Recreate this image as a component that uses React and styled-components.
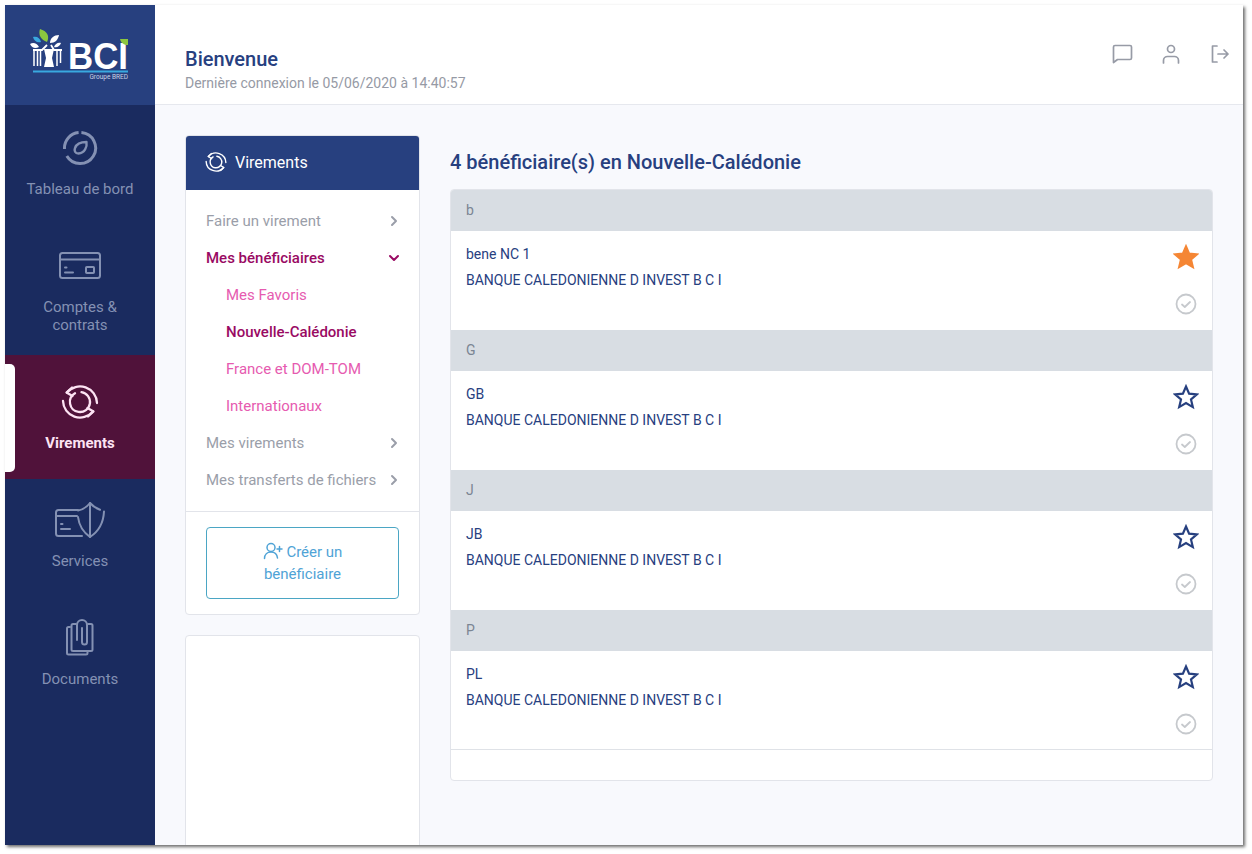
import React from 'react';
import styled, { createGlobalStyle } from 'styled-components';

const GlobalStyle = createGlobalStyle`
    html, body { margin: 0; padding: 0; height: 100%; background: #fff; overflow: hidden; }
    body { font-family: Roboto, "Liberation Sans", sans-serif; }
    * { box-sizing: border-box; }
`;

const NAV = [
    { id: 'board', label: 'Tableau de bord', icon: <BoardIcon /> },
    { id: 'accounts', label: <>Comptes &amp;<br />contrats</>, icon: <CardIcon /> },
    { id: 'transfers', label: 'Virements', icon: <TransferIcon size={38} width={2.300} />, active: true },
    { id: 'services', label: 'Services', icon: <ServicesIcon /> },
    { id: 'documents', label: 'Documents', icon: <DocumentsIcon /> },
];

const MENU = [
    { label: 'Faire un virement', arrow: 'right' },
    { label: 'Mes bénéficiaires', arrow: 'down', open: true },
    { label: 'Mes Favoris', sub: true },
    { label: 'Nouvelle-Calédonie', sub: true, current: true },
    { label: 'France et DOM-TOM', sub: true },
    { label: 'Internationaux', sub: true },
    { label: 'Mes virements', arrow: 'right' },
    { label: 'Mes transferts de fichiers', arrow: 'right' },
];

const GROUPS = [
    { letter: 'b', name: 'bene NC 1', favorite: true },
    { letter: 'G', name: 'GB' },
    { letter: 'J', name: 'JB' },
    { letter: 'P', name: 'PL' },
];

function BoardIcon() {
    return (
        <svg width="38" height="38" viewBox="0 0 38 38" fill="none" stroke="currentColor" strokeWidth="3" strokeLinecap="butt" strokeLinejoin="round">
            <path d="M3.500 20A15.500 15.500 0 0 1 17.600 3.600M20.400 3.600A15.500 15.500 0 1 1 5.800 27" />
            <path d="M25.500 13c.8 5-1.800 11-8 11.500-3.500 0-4.500-3-3.500-5.500 1.400-4 6.500-6 11.500-6z" strokeWidth="2.400" />
        </svg>
    );
}

function CardIcon() {
    return (
        <svg width="44" height="30" viewBox="0 0 44 30" fill="none" stroke="currentColor" strokeWidth="2" strokeLinecap="round" strokeLinejoin="round">
            <rect x="2" y="2" width="40" height="25" rx="2.500" />
            <path d="M2 8.500h40" />
            <path d="M7 16.500h1.500M7 21.500h8" />
            <rect x="28" y="16" width="8" height="6" rx=".8" />
        </svg>
    );
}

function TransferIcon({ size = 38, width = 2 }) {
    return (
        <svg width={size} height={size} viewBox="0 0 38 38" fill="none" stroke="currentColor" strokeWidth={width} strokeLinecap="round" strokeLinejoin="round">
            <path d="M6 9.500A17 17 0 0 1 36 20" />
            <path d="M11 4.500L5.500 9.500l6 3.500" />
            <path d="M32 28.500A17 17 0 0 1 2 18" />
            <path d="M27 33.500l5.500-5-6-3.500" />
            <path d="M20.500 9.100A10 10 0 0 1 17.500 28.900M17.500 28.900A10 10 0 0 1 14 10.300" />
        </svg>
    );
}

function ServicesIcon() {
    return (
        <svg width="52" height="38" viewBox="0 0 52 38" fill="none" stroke="currentColor" strokeWidth="2" strokeLinecap="round" strokeLinejoin="round">
            <path d="M24 9H4.500C3 9 2 10 2 11.500v21C2 34 3 35 4.500 35H28" />
            <path d="M2 15h21" />
            <path d="M7 23h1.500M7 28h9" />
            <path d="M24 9.500C29 8.500 33 6 36 2c3 3.500 6.500 5.500 10 6.800M50 10.500c-.5 10.500-5.500 20-14 25.500-7-5-11-12-12-20" />
            <path d="M36 2v34" />
        </svg>
    );
}

function DocumentsIcon() {
    return (
        <svg width="30" height="38" viewBox="0 0 30 38" fill="none" stroke="currentColor" strokeWidth="2" strokeLinecap="round" strokeLinejoin="round">
            <path d="M5 8H3.500C2.500 8 2 8.500 2 9.500V34c0 1 .5 1.500 1.500 1.500H21c1 0 1.500-.5 1.500-1.500v-2" />
            <path d="M11 5H8c-1 0-1.500.5-1.500 1.500v24c0 1 .5 1.500 1.500 1.500h18c1 0 1.500-.5 1.500-1.500v-24c0-1-.5-1.500-1.500-1.500h-3" />
            <path d="M12 21V6a5 5 0 0 1 10 0v17a2.500 2.500 0 0 1-5 0V9" />
        </svg>
    );
}

function Logo() {
    return (
        <svg width="110" height="60" viewBox="0 0 110 60">
            <path d="M15 4c7 2 10 7 7 13-6-2-9-7-7-13z" fill="#8cc63f" />
            <path d="M8 12c4-1 7 1 8 5-4 1-7-1-8-5z" fill="#39a9e0" />
            <path d="M5 19c3-2 7-1 9 3-4 2-7 1-9-3z" fill="#fff" />
            <path d="M34 10c-1 5-4 8-9 8 0-5 4-8 9-8z" fill="#fff" />
            <path d="M36 18c-1 3-4 5-7 4 1-3 4-5 7-4z" fill="#fff" />
            <path d="M8 25h9l5-5M26 20l3 5h8" stroke="#fff" strokeWidth="1.800" fill="none" />
            <path d="M9 25v16M12.500 25v16M15.500 25v16M32 25v16M35.500 25v13" stroke="#fff" strokeWidth="1.500" fill="none" />
            <path d="M19 24h10l-2 9 2 9h-10l2-9z" fill="#fff" />
            <text x="43" y="43.500" fontFamily="Liberation Sans, sans-serif" fontWeight="700" fontSize="36" textLength="60" lengthAdjust="spacingAndGlyphs" fill="#fff">BCI</text>
            <path d="M95 14h8v6c-4 0-7-2-8-6z" fill="#8cc63f" />
            <path d="M8 46.500h95" stroke="#39a9e0" strokeWidth="2" />
            <text x="103" y="53.500" textAnchor="end" fontFamily="Roboto, sans-serif" fontSize="6.500" fill="#c9d2e6">Groupe BRED</text>
        </svg>
    );
}

function Chevron({ dir }) {
    return (
        <svg width="14" height="14" viewBox="0 0 14 14" fill="none" stroke="currentColor" strokeWidth="2" strokeLinecap="round" strokeLinejoin="round">
            {dir === 'down' ? <path d="M3 5l4 4 4-4" /> : <path d="M5 3l4 4-4 4" />}
        </svg>
    );
}

function StarIcon({ filled }) {
    return (
        <svg width="26" height="26" viewBox="0 0 26 26" fill={filled ? '#f58634' : 'none'} stroke={filled ? '#f58634' : '#27407f'} strokeWidth="2.200" strokeLinejoin="miter">
            <path d="M13 2.500l3.100 7.200 7.800.7-5.900 5.100 1.800 7.600-6.800-4-6.800 4 1.800-7.600-5.900-5.100 7.800-.7z" />
        </svg>
    );
}

function CheckIcon() {
    return (
        <svg width="22" height="22" viewBox="0 0 22 22" fill="none" stroke="#c6c9cd" strokeWidth="1.800" strokeLinecap="round" strokeLinejoin="round">
            <circle cx="11" cy="11" r="9.500" />
            <path d="M7 11.500l2.800 2.500 5.200-5" />
        </svg>
    );
}

export default function App() {
    return (
        <>
            <GlobalStyle />
            <Frame>
                <Sidebar>
                    <LogoBox><Logo /></LogoBox>
                    <Nav>
                        {NAV.map((item) => (
                            <NavItem key={item.id} $active={item.active}>
                                {item.active && <ActiveTab />}
                                <NavIcon>{item.icon}</NavIcon>
                                <NavLabel $active={item.active}>{item.label}</NavLabel>
                            </NavItem>
                        ))}
                    </Nav>
                </Sidebar>

                <Main>
                    <Header>
                        <div>
                            <Welcome>Bienvenue</Welcome>
                            <LastLogin>Dernière connexion le 05/06/2020 à 14:40:57</LastLogin>
                        </div>
                        <HeaderIcons>
                            <svg width="22" height="22" viewBox="0 0 22 22" fill="none" stroke="currentColor" strokeWidth="1.700" strokeLinecap="round" strokeLinejoin="round">
                                <path d="M2.500 19.500V4c0-1 .6-1.500 1.500-1.500h15c1 0 1.500.5 1.500 1.500v11c0 1-.5 1.500-1.500 1.500H6.500z" />
                            </svg>
                            <svg width="22" height="22" viewBox="0 0 22 22" fill="none" stroke="currentColor" strokeWidth="1.700" strokeLinecap="round" strokeLinejoin="round">
                                <circle cx="11" cy="6" r="3.500" />
                                <path d="M3.500 20v-2.500c0-2.500 2-4 4-4h7c2 0 4 1.500 4 4V20" />
                            </svg>
                            <svg width="22" height="22" viewBox="0 0 22 22" fill="none" stroke="currentColor" strokeWidth="1.700" strokeLinecap="round" strokeLinejoin="round">
                                <path d="M8 3H3.500v16H8" />
                                <path d="M9 11h10M15 7l4 4-4 4" />
                            </svg>
                        </HeaderIcons>
                    </Header>

                    <Body>
                        <LeftColumn>
                            <MenuCard>
                                <MenuHead>
                                    <TransferIcon size={22} width={2.400} />
                                    Virements
                                </MenuHead>
                                <MenuList>
                                    {MENU.map((m) => (
                                        <MenuRow key={m.label} $open={m.open} $sub={m.sub} $current={m.current}>
                                            {m.label}
                                            {m.arrow && <Chevron dir={m.arrow} />}
                                        </MenuRow>
                                    ))}
                                </MenuList>
                                <MenuFoot>
                                    <CreateBtn>
                                        <svg width="20" height="18" viewBox="0 0 20 18" fill="none" stroke="currentColor" strokeWidth="1.500" strokeLinecap="round" strokeLinejoin="round">
                                            <circle cx="8" cy="5.500" r="4" />
                                            <path d="M1.500 16.500c0-4 2.800-6.500 6.500-6.500s6 2 6.500 6" />
                                            <path d="M14 7h5M16.500 4.500v5" />
                                        </svg>
                                        {' '}Créer un bénéficiaire
                                    </CreateBtn>
                                </MenuFoot>
                            </MenuCard>
                            <EmptyCard />
                        </LeftColumn>

                        <Content>
                            <PageTitle>4 bénéficiaire(s) en Nouvelle-Calédonie</PageTitle>
                            <Panel>
                                {GROUPS.map((g) => (
                                    <section key={g.letter}>
                                        <GroupHead>{g.letter}</GroupHead>
                                        <Row>
                                            <div>
                                                <Name>{g.name}</Name>
                                                <Bank>BANQUE CALEDONIENNE D INVEST B C I</Bank>
                                            </div>
                                            <RowIcons>
                                                <StarIcon filled={g.favorite} />
                                                <CheckIcon />
                                            </RowIcons>
                                        </Row>
                                    </section>
                                ))}
                                <PanelFoot />
                            </Panel>
                        </Content>
                    </Body>
                </Main>
            </Frame>
        </>
    );
}

const Frame = styled.div`
    display: flex;
    width: 1238px; height: 840px;
    margin: 5px 0 0 5px;
    background: #f8f9fd;
    box-shadow: 2px 2px 3px rgba(60, 60, 60, 0.75);
    overflow: hidden;
`;

const Sidebar = styled.aside`
    width: 150px; flex-shrink: 0;
    background: #1a2b5f;
`;

const LogoBox = styled.div`
    height: 100px;
    background: #27407f;
    display: flex; align-items: center; justify-content: center;
`;

const Nav = styled.nav`display: flex; flex-direction: column;`;

const NavItem = styled.div`
    position: relative;
    display: flex; flex-direction: column; align-items: center;
    padding: ${({ $active }) => ($active ? '29px 0 27px' : '25px 0 25px')};
    margin: ${({ $active }) => ($active ? '-4px 0 -2px' : '0')};
    background: ${({ $active }) => ($active ? '#50123a' : 'transparent')};
    color: ${({ $active }) => ($active ? '#fde3f3' : '#8491b3')};
`;

const ActiveTab = styled.span`
    position: absolute; left: 0; top: 9px;
    width: 10px; height: 108px;
    background: #fff;
    border-radius: 0 5px 5px 0;
`;

const NavIcon = styled.div`
    height: 36px; margin-bottom: 14px;
    display: flex; align-items: center; justify-content: center;
`;

const NavLabel = styled.div`
    font-size: 15px; line-height: 18px;
    text-align: center;
    font-weight: ${({ $active }) => ($active ? 700 : 400)};
`;

const Main = styled.main`
    flex: 1; min-width: 0;
    display: flex; flex-direction: column;
`;

const Header = styled.header`
    height: 100px; flex-shrink: 0;
    background: #fff;
    border-bottom: 1px solid #e6e8ee;
    padding: 42px 12px 0 30px;
    display: flex; justify-content: space-between; align-items: flex-start;
`;

const Welcome = styled.div`
    font-size: 20px; line-height: 24px; font-weight: 500;
    color: #27407f;
`;

const LastLogin = styled.div`
    font-size: 14px; line-height: 20px; margin-top: 2px;
    color: #969aa5;
`;

const HeaderIcons = styled.div`
    display: flex; gap: 27px;
    margin-top: -4px;
    color: #979ba6;
`;

const Body = styled.div`
    flex: 1; min-height: 0;
    display: flex; gap: 30px;
    padding: 30px 30px 0;
`;

const LeftColumn = styled.div`
    width: 235px; flex-shrink: 0;
    display: flex; flex-direction: column; gap: 20px;
`;

const MenuCard = styled.div`
    background: #fff;
    border: 1px solid #e2e4ea;
    border-radius: 4px;
`;

const MenuHead = styled.div`
    height: 54px;
    padding: 0 0 2px 19px;
    background: #27407f;
    border-radius: 3px 3px 0 0;
    color: #fff; font-size: 16px;
    display: flex; align-items: center; gap: 8px;
`;

const MenuList = styled.div`
    padding: 12px 0 13px;
    border-bottom: 1px solid #e2e4ea;
`;

const MenuRow = styled.div`
    height: 37px;
    display: flex; align-items: center; justify-content: space-between;
    padding: 0 18px 0 ${({ $sub }) => ($sub ? '40px' : '20px')};
    font-size: 15px;
    font-weight: ${({ $open, $current }) => ($open || $current ? 500 : 400)};
    color: ${({ $open, $current, $sub }) => {
        if ($open || $current) return '#990a63';
        return $sub ? '#e65bb0' : '#9a9ea9';
    }};
`;

const MenuFoot = styled.div`padding: 15px 20px;`;

const CreateBtn = styled.div`
    height: 72px;
    border: 1px solid #4ba6c4;
    border-radius: 4px;
    padding: 13px 30px;
    text-align: center;
    font-size: 15px; line-height: 22px;
    color: #4fa3d6;
    svg { vertical-align: -3px; }
`;

const EmptyCard = styled.div`
    flex: 1;
    margin-bottom: -4px;
    background: #fff;
    border: 1px solid #e2e4ea;
    border-radius: 4px;
`;

const Content = styled.div`flex: 1; min-width: 0;`;

const PageTitle = styled.h1`
    margin: 14px 0 14px;
    font-size: 20px; line-height: 26px; font-weight: 500;
    color: #27407f;
`;

const Panel = styled.div`
    background: #fff;
    border: 1px solid #e2e4ea;
    border-radius: 4px;
    overflow: hidden;
`;

const GroupHead = styled.div`
    height: 41px;
    padding: 0 15px;
    background: #d8dde3;
    color: #7b8593;
    font-size: 14px; line-height: 40px;
`;

const Row = styled.div`
    height: 99px;
    padding: 12px 13px 0 15px;
    display: flex; justify-content: space-between;
    section:last-of-type & { border-bottom: 1px solid #dfe2e7; }
`;

const Name = styled.div`
    font-size: 14px; line-height: 22px;
    color: #27407f;
`;

const Bank = styled.div`
    margin-top: 4px;
    font-size: 14px; line-height: 22px;
    color: #27407f;
`;

const RowIcons = styled.div`
    display: flex; flex-direction: column; align-items: center; gap: 23px;
    margin-top: 1px;
`;

const PanelFoot = styled.div`height: 30px;`;
